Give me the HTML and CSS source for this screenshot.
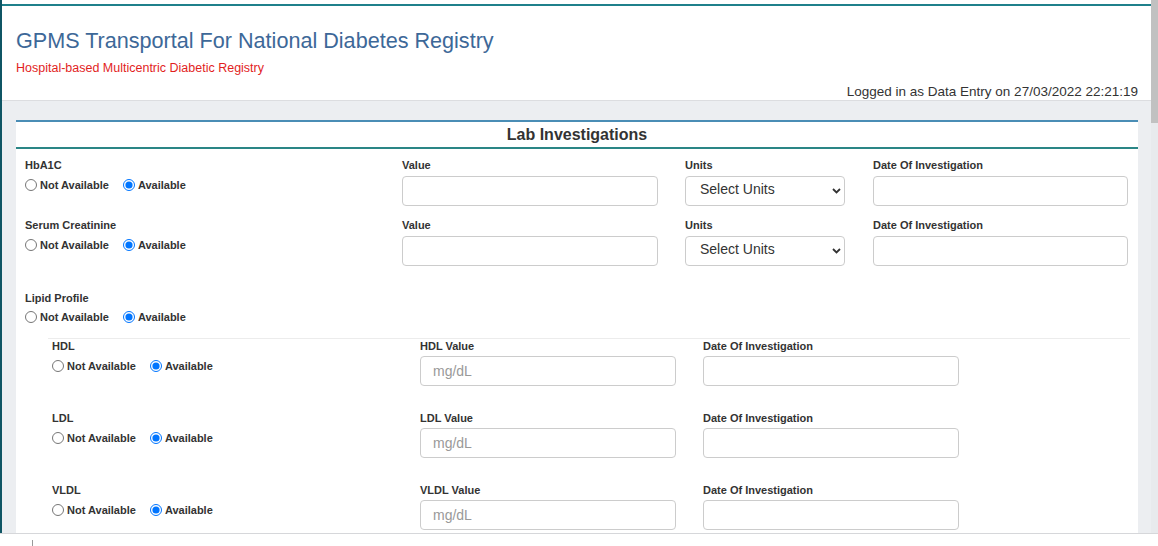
FILE: index.html
```html
<!DOCTYPE html>
<html lang="en">
<head>
    <meta charset="UTF-8">
    <meta name="viewport" content="width=device-width, initial-scale=1.0">
    <title>Lab Investigations</title>
    <link rel="stylesheet" href="styles.css">
</head>
<body>
    <div class="window">
        <div class="screen">
            <div class="topstrip"></div>

            <header class="header">
                <h1 class="title">GPMS Transportal For National Diabetes Registry</h1>
                <p class="subtitle">Hospital-based Multicentric Diabetic Registry</p>
                <p class="login">Logged in as Data Entry on 27/03/2022 22:21:19</p>
            </header>

            <main class="content">
                <section class="card">
                    <h2 class="card-title">Lab Investigations</h2>
                    <div class="card-body">

                        <div class="test-row">
                            <div class="test-name">
                                <label class="lbl">HbA1C</label>
                                <div class="radios">
                                    <label class="radio"><input type="radio" name="hba1c">Not Available</label>
                                    <label class="radio"><input type="radio" name="hba1c" checked>Available</label>
                                </div>
                            </div>
                            <div class="field">
                                <label class="lbl">Value</label>
                                <input type="text" class="box">
                            </div>
                            <div class="field">
                                <label class="lbl">Units</label>
                                <div class="select-wrap">
                                    <select class="box select"><option>Select Units</option></select>
                                    <svg class="chev" width="9" height="6" viewBox="0 0 9 6"><path d="M1 1 L4.5 4.5 L8 1" fill="none" stroke="#333" stroke-width="1.8"/></svg>
                                </div>
                            </div>
                            <div class="field">
                                <label class="lbl">Date Of Investigation</label>
                                <input type="text" class="box">
                            </div>
                        </div>

                        <div class="test-row">
                            <div class="test-name">
                                <label class="lbl">Serum Creatinine</label>
                                <div class="radios">
                                    <label class="radio"><input type="radio" name="creat">Not Available</label>
                                    <label class="radio"><input type="radio" name="creat" checked>Available</label>
                                </div>
                            </div>
                            <div class="field">
                                <label class="lbl">Value</label>
                                <input type="text" class="box">
                            </div>
                            <div class="field">
                                <label class="lbl">Units</label>
                                <div class="select-wrap">
                                    <select class="box select"><option>Select Units</option></select>
                                    <svg class="chev" width="9" height="6" viewBox="0 0 9 6"><path d="M1 1 L4.5 4.5 L8 1" fill="none" stroke="#333" stroke-width="1.8"/></svg>
                                </div>
                            </div>
                            <div class="field">
                                <label class="lbl">Date Of Investigation</label>
                                <input type="text" class="box">
                            </div>
                        </div>

                        <div class="lipid">
                            <label class="lbl">Lipid Profile</label>
                            <div class="radios">
                                <label class="radio"><input type="radio" name="lipid">Not Available</label>
                                <label class="radio"><input type="radio" name="lipid" checked>Available</label>
                            </div>
                        </div>

                        <div class="sub">
                            <div class="sub-row">
                                <div class="test-name">
                                    <label class="lbl">HDL</label>
                                    <div class="radios sub-radios">
                                        <label class="radio"><input type="radio" name="hdl">Not Available</label>
                                        <label class="radio"><input type="radio" name="hdl" checked>Available</label>
                                    </div>
                                </div>
                                <div class="field">
                                    <label class="lbl">HDL Value</label>
                                    <input type="text" class="box" placeholder="mg/dL">
                                </div>
                                <div class="field">
                                    <label class="lbl">Date Of Investigation</label>
                                    <input type="text" class="box">
                                </div>
                            </div>

                            <div class="sub-row">
                                <div class="test-name">
                                    <label class="lbl">LDL</label>
                                    <div class="radios sub-radios">
                                        <label class="radio"><input type="radio" name="ldl">Not Available</label>
                                        <label class="radio"><input type="radio" name="ldl" checked>Available</label>
                                    </div>
                                </div>
                                <div class="field">
                                    <label class="lbl">LDL Value</label>
                                    <input type="text" class="box" placeholder="mg/dL">
                                </div>
                                <div class="field">
                                    <label class="lbl">Date Of Investigation</label>
                                    <input type="text" class="box">
                                </div>
                            </div>

                            <div class="sub-row">
                                <div class="test-name">
                                    <label class="lbl">VLDL</label>
                                    <div class="radios sub-radios">
                                        <label class="radio"><input type="radio" name="vldl">Not Available</label>
                                        <label class="radio"><input type="radio" name="vldl" checked>Available</label>
                                    </div>
                                </div>
                                <div class="field">
                                    <label class="lbl">VLDL Value</label>
                                    <input type="text" class="box" placeholder="mg/dL">
                                </div>
                                <div class="field">
                                    <label class="lbl">Date Of Investigation</label>
                                    <input type="text" class="box">
                                </div>
                            </div>
                        </div>

                    </div>
                </section>
            </main>
        </div>
        <div class="scrollbar"><div class="thumb"></div></div>
    </div>
    <div class="footer"><span class="tick"></span></div>
</body>
</html>
```

FILE: styles.css
```css
*{
    margin: 0;
    padding: 0;
    box-sizing: border-box;
}
html, body{
    height: 546px;
    overflow: hidden;
}
body{
    font-family: "Liberation Sans", Arial, sans-serif;
    color: #333;
    background: #fff;
    display: flex;
    flex-direction: column;
}
.window{
    height: 534px;
    display: flex;
    border-bottom: 1px solid #d6d7da;
}
.screen{
    flex: 1;
    display: flex;
    flex-direction: column;
    border-left: 2px solid #0f5564;
    overflow: hidden;
}
.scrollbar{
    width: 7px;
    background: #e8eaed;
}
.thumb{
    height: 123px;
    background: #c1c1c1;
}

.topstrip{
    height: 6px;
    border-bottom: 2px solid #1f808b;
}

.header{
    background: #fff;
    padding: 22px 13px 0 14px;
    border-bottom: 1px solid #dcdde0;
}
.title{
    font-size: 21.6px;
    line-height: 26px;
    font-weight: normal;
    color: #3d6898;
}
.subtitle{
    margin-top: 6px;
    font-size: 12.5px;
    line-height: 16px;
    color: #e21e1e;
}
.login{
    margin-top: 8px;
    text-align: right;
    font-size: 13.5px;
    line-height: 16px;
    color: #333;
}

.content{
    flex: 1;
    background: #eceef1;
    padding: 19px 13px 0 14px;
    overflow: hidden;
}
.card{
    background: #fff;
    border-top: 2px solid #4a8db5;
    height: 100%;
}
.card-title{
    font-size: 16px;
    line-height: 25px;
    text-align: center;
    color: #333;
    border-bottom: 2px solid #2a8686;
}
.card-body{
    padding: 9px 8px 0 9px;
}

.lbl{
    display: block;
    font-size: 11px;
    line-height: 14px;
    font-weight: bold;
    color: #333;
}
.field .lbl{
    margin-bottom: 4px;
}
.radios{
    display: flex;
    align-items: center;
    gap: 14px;
    height: 15px;
    margin-top: 5px;
}
.radio{
    display: inline-flex;
    align-items: center;
    font-size: 11px;
    font-weight: bold;
    color: #333;
}
.radio input{
    width: 12px;
    height: 12px;
    margin: 0 3px 0 0;
}

.box{
    display: block;
    width: 100%;
    height: 30px;
    border: 1px solid #ccc;
    border-radius: 4px;
    padding: 0 12px;
    font-family: "Liberation Sans", Arial, sans-serif;
    font-size: 14px;
    color: #333;
    background: #fff;
}
.box::placeholder{
    color: #999;
}
.select-wrap{
    position: relative;
}
.select{
    appearance: none;
    -webkit-appearance: none;
    padding: 0 0 4px 14px;
}
.chev{
    position: absolute;
    right: 4px;
    top: 12px;
}

.test-row{
    display: grid;
    grid-template-columns: 350px 256px 160px 256px;
    column-gap: 27px;
    margin-bottom: 12px;
}
.test-row .field:last-child{
    margin-left: 1px;
}
.lipid{
    margin-top: 24.5px;
    padding-bottom: 13px;
}

.sub{
    margin-left: 23px;
    border-top: 1px solid #ececec;
    padding: 0 0 0 4px;
}
.sub-row{
    display: grid;
    grid-template-columns: 341px 256px 256px;
    column-gap: 27px;
    margin-bottom: 25px;
}
.sub-row .field .lbl{
    margin-bottom: 3px;
}
.sub-radios{
    margin-top: 6px;
}

.footer{
    flex: 1;
    background: #fff;
    padding-left: 32px;
    display: flex;
    align-items: flex-end;
}
.tick{
    width: 1px;
    height: 6px;
    background: #999;
}
```
